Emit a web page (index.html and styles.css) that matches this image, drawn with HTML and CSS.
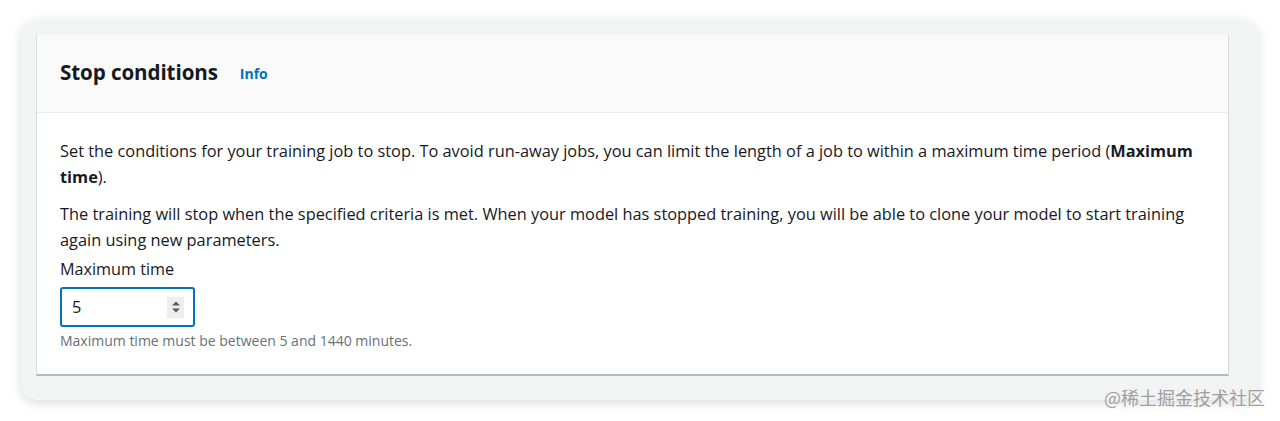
FILE: index.html
```html
<!DOCTYPE html>
<html>
<head>
<meta charset="utf-8">
<link rel="stylesheet" href="styles.css">
</head>
<body>
<div class="frame">
  <section class="panel">
    <header class="panel-header">
      <h2 class="title">Stop conditions</h2>
      <a class="info">Info</a>
    </header>
    <div class="panel-body">
      <p class="text">Set the conditions for your training job to stop. To avoid run-away jobs, you can limit the length of a job to within a maximum time period (<b>Maximum time</b>).</p>
      <p class="text last">The training will stop when the specified criteria is met. When your model has stopped training, you will be able to clone your model to start training again using new parameters.</p>
      <label class="label">Maximum time</label>
      <div class="input">
        <span class="value">5</span>
        <span class="spinner">
          <svg width="10" height="14" viewBox="0 0 10 14"><path d="M1 5.5 L5 1.5 L9 5.5 Z" fill="#545b64"/><path d="M1 8.5 L5 12.5 L9 8.5 Z" fill="#545b64"/></svg>
        </span>
      </div>
      <div class="hint">Maximum time must be between 5 and 1440 minutes.</div>
    </div>
  </section>
  <div class="watermark">@稀土掘金技术社区</div>
</div>
</body>
</html>
```
FILE: styles.css
```css
* { box-sizing: border-box; }
html, body { margin: 0; padding: 0; background: #ffffff; }
body {
  font-family: "Open Sans", "Noto Sans", Arial, sans-serif;
  color: #16191f;
  padding: 20px 22px 21px 21px;
  height: 421px;
}
.frame {
  position: relative;
  background: #f2f3f3;
  border-radius: 16px;
  box-shadow: 0 3px 12px rgba(0,0,0,0.14);
  height: 380px;
  padding: 15px 29px 0 15px;
}
.panel {
  background: #ffffff;
  border-left: 1px solid #dadcdd;
  border-right: 1px solid #d5dbdb;
  border-bottom: 2px solid #b6b9ba;
  height: 341px;
}
.panel-header {
  background: #fafafa;
  border-bottom: 1px solid #eaeded;
  height: 78px;
  display: flex;
  align-items: center;
  padding: 0 0 4px 23px;
}
.title {
  margin: 0;
  font-size: 20.6px;
  font-weight: 700;
  letter-spacing: -0.1px;
}
.info {
  margin-left: 22px;
  margin-top: 3px;
  color: #0073bb;
  font-size: 14px;
  font-weight: 700;
}
.panel-body {
  padding: 25px 23px 0 23px;
}
.text {
  margin: 0 0 11px 0;
  font-size: 16.35px;
  line-height: 26px;
}
.text.last { margin-bottom: 5px; }
.label {
  display: block;
  font-size: 16.2px;
  line-height: 22px;
}
.input {
  margin-top: 7px;
  width: 135px;
  height: 40px;
  border: 2px solid #0073bb;
  border-radius: 3px;
  display: flex;
  align-items: center;
  justify-content: space-between;
  padding: 0 9px 0 10px;
}
.value { font-size: 16.3px; }
.spinner {
  background: #eeeeee;
  width: 17px;
  height: 21px;
  display: flex;
  align-items: center;
  justify-content: center;
}
.hint {
  margin-top: 4px;
  font-size: 14px;
  color: #687078;
}
.watermark {
  position: absolute;
  right: -7px;
  bottom: -10px;
  font-family: "Noto Sans CJK SC", sans-serif;
  font-size: 18px;
  color: #a0a0a0;
}
```
